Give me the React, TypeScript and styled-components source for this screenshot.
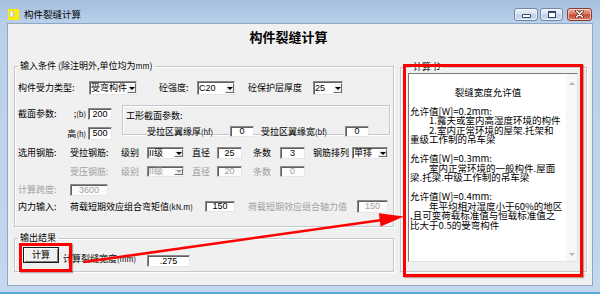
import React from 'react'
import styled, { createGlobalStyle } from 'styled-components'

const GlobalStyle = createGlobalStyle`
  html, body { margin: 0; padding: 0; background: #fff; }
  body {
    font-family: "Noto Sans CJK SC", "Noto Sans", sans-serif;
    font-size: 9px;
    color: #000;
  }
`

const Window = styled.div`
  position: relative;
  width: 600px;
  height: 294px;
  box-sizing: border-box;
  padding: 0 7px 6px 7px;
  background: linear-gradient(#a4bedc 0px, #b9d0ea 23px, #c3d7ed 100%);
  border-bottom: 2px solid #5aa9de;
  display: flex;
  flex-direction: column;
  overflow: hidden;
`

const TitleBar = styled.div`
  height: 23px;
  box-sizing: border-box;
  padding-top: 5px;
  display: flex;
  align-items: center;
  flex: none;
`

const AppIcon = styled.svg`
  width: 11px;
  height: 11px;
  margin-left: 1px;
  flex: none;
`

const TitleText = styled.span`
  margin-left: 5px;
  font-size: 9.5px;
  line-height: 12px;
`

const CaptionButtons = styled.div`
  margin-left: auto;
  margin-right: 1px;
  display: flex;
  align-items: center;
`

const CaptionButton = styled.div<{ $w: number; $gap: number; $close?: boolean }>`
  width: ${p => p.$w}px;
  height: 13px;
  margin-left: ${p => p.$gap}px;
  box-sizing: border-box;
  border: 1px solid ${p => (p.$close ? '#8d3b2f' : '#6f87a8')};
  border-radius: 3px;
  background: ${p =>
    p.$close
      ? 'linear-gradient(#eab0a2, #d8735e 48%, #c8472f 52%, #d9806a)'
      : 'linear-gradient(#eef3fa, #d3e0f0 48%, #bccfe6 52%, #d0e0f2)'};
  box-shadow: inset 0 0 0 1px rgba(255, 255, 255, 0.55);
  display: flex;
  align-items: center;
  justify-content: center;
`

const MinGlyph = styled.span`
  width: 7px;
  height: 2px;
  margin-top: 3px;
  background: #fff;
  border: 1px solid #34465f;
  border-radius: 1px;
`

const MaxGlyph = styled.span`
  width: 6px;
  height: 4px;
  border: 1px solid #34465f;
  border-top-width: 2px;
  background: #fff;
`

const Client = styled.div`
  flex: 1;
  background: #f0f0f0;
  border: 1px solid #8fa7c5;
  display: flex;
  flex-direction: column;
`

const Heading = styled.div`
  height: 25px;
  line-height: 25px;
  text-align: center;
  padding-right: 23px;
  font-size: 13px;
  font-weight: 700;
`

const Body = styled.div`
  display: flex;
  align-items: flex-start;
`

const LeftCol = styled.div`
  margin-left: 6px;
  width: 380px;
  display: flex;
  flex-direction: column;
`

const Group = styled.fieldset<{ $mt: number; $pl: number; $pb: number; $w: number }>`
  margin: ${p => p.$mt}px 0 0 0;
  padding: 0 0 ${p => p.$pb}px ${p => p.$pl}px;
  width: ${p => p.$w}px;
  box-sizing: border-box;
  border: 1px solid #c2c8cf;
  box-shadow: 1px 1px 0 #fff, inset 1px 1px 0 #fff;
  min-width: 0;
`

const Caption = styled.legend<{ $ml?: number }>`
  padding: 0 2px;
  margin-left: ${p => p.$ml ?? 0}px;
  font-size: 9px;
  line-height: 10px;
  height: 10px;
`

const Row = styled.div<{ $mt: number; $h: number }>`
  margin-top: ${p => p.$mt}px;
  height: ${p => p.$h}px;
  display: flex;
  align-items: center;
`

const Label = styled.span<{ $w?: number; $ml?: number; $mt?: number; $off?: boolean; $right?: boolean }>`
  flex: none;
  width: ${p => (p.$w ? `${p.$w}px` : 'auto')};
  margin-left: ${p => p.$ml ?? 0}px;
  margin-top: ${p => p.$mt ?? 0}px;
  white-space: nowrap;
  line-height: 10px;
  color: ${p => (p.$off ? '#a0a0a0' : '#000')};
  text-align: ${p => (p.$right ? 'right' : 'left')};
  box-sizing: border-box;
  padding-right: ${p => (p.$right ? 2 : 0)}px;
`

const Small = styled.span`
  font-size: 7.5px;
`

const Sunken = styled.div<{ $w: number; $h?: number; $off?: boolean; $mt?: number }>`
  flex: none;
  width: ${p => p.$w}px;
  height: ${p => (p.$h ? `${p.$h}px` : '100%')};
  margin-top: ${p => p.$mt ?? 0}px;
  box-sizing: border-box;
  border: 1px solid;
  border-color: #8a8a8a #e6e6e6 #e6e6e6 #8a8a8a;
  box-shadow: inset 1px 1px 0 #5f5f5f;
  background: ${p => (p.$off ? '#fbfbfb' : '#fff')};
  color: ${p => (p.$off ? '#a0a0a0' : '#000')};
`

const TextBox = styled(Sunken)`
  display: flex;
  align-items: center;
  justify-content: center;
  line-height: 9px;
  font-family: "Liberation Sans", "Noto Sans CJK SC", sans-serif;
  font-size: 9px;
`

const Combo = styled(Sunken)`
  display: flex;
  align-items: center;
  padding: 1px 0 1px 1px;
  line-height: 9px;
`

const ComboText = styled.span`
  flex: 1;
  white-space: nowrap;
  font-family: "Liberation Sans", "Noto Sans CJK SC", sans-serif;
`

const DropButton = styled.span<{ $off?: boolean }>`
  flex: none;
  width: 9px;
  height: 100%;
  box-sizing: border-box;
  background: #f0f0f0;
  border: 1px solid;
  border-color: #fff #6a6a6a #6a6a6a #fff;
  display: flex;
  align-items: center;
  justify-content: center;

  &::after {
    content: '';
    border-left: 3px solid transparent;
    border-right: 3px solid transparent;
    border-top: 3px solid ${p => (p.$off ? '#a0a0a0' : '#000')};
  }
`

const SectionBlock = styled.div`
  margin-top: 10px;
  height: 35px;
  display: flex;
  align-items: flex-start;
`

const SectionGrid = styled.div`
  margin-top: 3px;
  display: grid;
  grid-template-columns: 45px 25px 24px;
  grid-template-rows: 12px 13px;
  row-gap: 7px;
  align-items: center;
`

const FlangeBox = styled.div`
  margin-left: 10px;
  width: 268px;
  height: 30px;
  box-sizing: border-box;
  border: 1px solid #c2c8cf;
  box-shadow: 1px 1px 0 #fff, inset 1px 1px 0 #fff;
  padding: 3px 0 0 3px;
`

const PushButton = styled.div`
  flex: none;
  margin-left: 5px;
  width: 36px;
  height: 16px;
  box-sizing: border-box;
  border: 1px solid #1a1a1a;
  background: #f0f0f0;
  box-shadow: inset 1px 1px 0 #fff, inset -1px -1px 0 #808080;
  display: flex;
  align-items: center;
  justify-content: center;
  line-height: 10px;
`

const OutRow = styled.div`
  margin-top: 4px;
  height: 20px;
  display: flex;
  align-items: flex-start;
`

const RightCol = styled.div`
  margin-left: 6px;
  width: 187px;
`

const Memo = styled.div`
  margin-top: 1px;
  width: 170px;
  height: 189px;
  box-sizing: border-box;
  border: 1px solid;
  border-color: #7a7a7a #e3e3e3 #e3e3e3 #7a7a7a;
  background: #fff;
  display: flex;
`

const MemoText = styled.div`
  flex: 1;
  padding: 4px 0 0 1px;
  font-size: 9.5px;
  line-height: 9.5px;
  white-space: pre;
  overflow: hidden;
`

const MemoLine = styled.div<{ $indent?: boolean; $center?: boolean }>`
  height: 9.5px;
  padding-left: ${p => (p.$indent ? 19 : 0)}px;
  text-align: ${p => (p.$center ? 'center' : 'left')};
`

const ScrollBar = styled.div`
  flex: none;
  width: 11px;
  background: #f7f7f7;
  display: flex;
  flex-direction: column;
  justify-content: space-between;
  align-items: center;
  padding: 8px 0 5px;
  box-sizing: border-box;
`

const ScrollArrow = styled.span<{ $down?: boolean }>`
  border-left: 3px solid transparent;
  border-right: 3px solid transparent;
  ${p => (p.$down ? 'border-top' : 'border-bottom')}: 3px solid #b4b4b4;
`

const Marker = styled.div<{ $x: number; $y: number; $w: number; $h: number }>`
  position: absolute;
  left: ${p => p.$x}px;
  top: ${p => p.$y}px;
  width: ${p => p.$w}px;
  height: ${p => p.$h}px;
  box-sizing: border-box;
  border: 3px solid #ff0000;
  box-shadow: 1px 1px 1px rgba(80, 0, 0, 0.35);
  pointer-events: none;
`

const ArrowLayer = styled.svg`
  position: absolute;
  left: 0;
  top: 0;
  width: 600px;
  height: 294px;
  pointer-events: none;
`

const memo = [
  { t: '' },
  { t: '裂缝宽度允许值', center: true },
  { t: '' },
  { t: '允许值[W]=0.2mm:' },
  { t: '1.露天或室内高湿度环境的构件', indent: true },
  { t: '2.室内正常环境的屋架.托架和', indent: true },
  { t: '重级工作制的吊车梁' },
  { t: '' },
  { t: '允许值[W]=0.3mm:' },
  { t: '室内正常环境的一般构件.屋面', indent: true },
  { t: '梁.托梁.中级工作制的吊车梁' },
  { t: '' },
  { t: '允许值[W]=0.4mm:' },
  { t: '年平均相对湿度小于60%的地区', indent: true },
  { t: ',且可变荷载标准值与恒载标准值之' },
  { t: '比大于0.5的受弯构件' },
]

const ComboBox = (props: { w: number; value: string; off?: boolean }) => (
  <Combo $w={props.w} $off={props.off}>
    <ComboText>{props.value}</ComboText>
    <DropButton $off={props.off} />
  </Combo>
)

export default function App() {
  return (
    <>
      <GlobalStyle />
      <Window>
        <TitleBar>
          <AppIcon viewBox="0 0 11 11">
            <rect x="0" y="0" width="11" height="11" fill="#ffee00" />
            <rect x="2" y="2" width="3" height="6" fill="#fff" stroke="#9aa9c0" strokeWidth="0.6" />
            <rect x="5.5" y="3" width="1" height="4" fill="#b8c8e0" />
          </AppIcon>
          <TitleText>构件裂缝计算</TitleText>
          <CaptionButtons>
            <CaptionButton $w={24} $gap={0}>
              <MinGlyph />
            </CaptionButton>
            <CaptionButton $w={23} $gap={2}>
              <MaxGlyph />
            </CaptionButton>
            <CaptionButton $w={25} $gap={4} $close>
              <svg width="9" height="8" viewBox="0 0 9 8">
                <path d="M1.5 1 L7.5 7 M7.5 1 L1.5 7" stroke="#5a1d14" strokeWidth="3" strokeLinecap="round" />
                <path d="M1.5 1 L7.5 7 M7.5 1 L1.5 7" stroke="#fff" strokeWidth="1.6" strokeLinecap="round" />
              </svg>
            </CaptionButton>
          </CaptionButtons>
        </TitleBar>

        <Client>
          <Heading>构件裂缝计算</Heading>
          <Body>
            <LeftCol>
              <Group $mt={12} $pl={3} $pb={13} $w={380}>
                <Caption>
                  输入条件 (除注明外,单位均为<Small>mm</Small>)
                </Caption>

                <Row $mt={10} $h={14}>
                  <Label $w={71}>构件受力类型:</Label>
                  <ComboBox w={48} value="受弯构件" />
                  <Label $ml={22} $w={38}>砼强度:</Label>
                  <ComboBox w={38} value="C20" />
                  <Label $ml={13} $w={65}>砼保护层厚度</Label>
                  <ComboBox w={30} value="25" />
                </Row>

                <SectionBlock>
                  <SectionGrid>
                    <Label>截面参数:</Label>
                    <Label $right>
                      ;<Small>(b)</Small>
                    </Label>
                    <TextBox $w={24}>200</TextBox>
                    <span />
                    <Label $right>
                      高<Small>(h)</Small>
                    </Label>
                    <TextBox $w={24}>500</TextBox>
                  </SectionGrid>
                  <FlangeBox>
                    <Label>工形截面参数:</Label>
                    <Row $mt={4} $h={11}>
                      <Label $ml={21} $w={83}>
                        受拉区翼缘厚<Small>(hf)</Small>
                      </Label>
                      <TextBox $w={24}>0</TextBox>
                      <Label $ml={7} $w={84}>
                        受拉区翼缘宽<Small>(bf)</Small>
                      </Label>
                      <TextBox $w={24}>0</TextBox>
                    </Row>
                  </FlangeBox>
                </SectionBlock>

                <Row $mt={7} $h={12}>
                  <Label $w={52}>选用钢筋:</Label>
                  <Label $w={51}>受拉钢筋:</Label>
                  <Label $w={26}>级别</Label>
                  <ComboBox w={37} value="II级" />
                  <Label $ml={8} $w={25}>直径</Label>
                  <TextBox $w={25}>25</TextBox>
                  <Label $ml={11} $w={27}>条数</Label>
                  <TextBox $w={25}>3</TextBox>
                  <Label $ml={8} $w={39}>钢筋排列</Label>
                  <ComboBox w={36} value="单排" />
                </Row>

                <Row $mt={7} $h={11}>
                  <Label $w={52} />
                  <Label $w={51} $off>受压钢筋:</Label>
                  <Label $w={26} $off>级别</Label>
                  <ComboBox w={37} value="II级" off />
                  <Label $ml={8} $w={25} $off>直径</Label>
                  <TextBox $w={25} $off>20</TextBox>
                  <Label $ml={11} $w={27} $off>条数</Label>
                  <TextBox $w={25} $off>0</TextBox>
                </Row>

                <Row $mt={7} $h={12}>
                  <Label $w={52} $off>计算跨度:</Label>
                  <TextBox $w={38} $off>3600</TextBox>
                </Row>

                <Row $mt={4} $h={13}>
                  <Label $w={52}>内力输入:</Label>
                  <Label $w={135}>
                    荷载短期效应组合弯矩值<Small>(kN.m)</Small>
                  </Label>
                  <TextBox $w={30} $h={11}>150</TextBox>
                  <Label $ml={13} $w={109} $off>荷载短期效应组合轴力值</Label>
                  <TextBox $w={31} $off>150</TextBox>
                </Row>
              </Group>

              <Group $mt={6} $pl={3} $pb={4} $w={380}>
                <Caption>输出结果</Caption>
                <OutRow>
                  <PushButton>计算</PushButton>
                  <Label $ml={4} $w={84} $mt={7}>
                    计算裂缝宽度<Small>(mm)</Small>
                  </Label>
                  <TextBox $w={43} $h={12} $mt={8}>.275</TextBox>
                </OutRow>
              </Group>
            </LeftCol>

            <RightCol>
              <Group $mt={13} $pl={7} $pb={9} $w={187}>
                <Caption $ml={3}>计算书</Caption>
                <Memo>
                  <MemoText>
                    {memo.map((l, i) => (
                      <MemoLine key={i} $indent={l.indent} $center={l.center}>
                        {l.t}
                      </MemoLine>
                    ))}
                  </MemoText>
                  <ScrollBar>
                    <ScrollArrow />
                    <ScrollArrow $down />
                  </ScrollBar>
                </Memo>
              </Group>
            </RightCol>
          </Body>
        </Client>

        <Marker $x={19} $y={243} $w={53} $h={29} />
        <Marker $x={403} $y={64} $w={180} $h={213} />
        <ArrowLayer viewBox="0 0 600 294">
          <line x1="84" y1="262" x2="382" y2="220" stroke="#ff0000" strokeWidth="2.6" />
          <polygon points="404,216.5 380.6,226.4 378.8,213.2" fill="#ff0000" />
        </ArrowLayer>
      </Window>
    </>
  )
}
